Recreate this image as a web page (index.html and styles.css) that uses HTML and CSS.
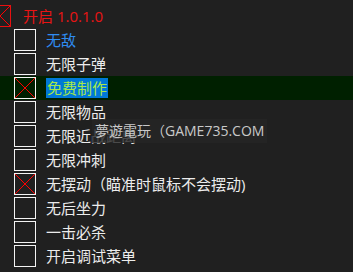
FILE: index.html
```html
<!DOCTYPE html>
<html lang="zh">
<head>
  <meta charset="UTF-8" />
  <title>开启 1.0.1.0</title>
  <link rel="stylesheet" href="styles.css">
</head>
<body>
  <div class="menu">
    <div class="row head">
      <span class="box checked red"></span>
      <span class="label">开启 1.0.1.0</span>
    </div>
    <div class="row">
      <span class="box"></span>
      <span class="label blue">无敌</span>
    </div>
    <div class="row">
      <span class="box"></span>
      <span class="label">无限子弹</span>
    </div>
    <div class="row active">
      <span class="box checked"></span>
      <span class="label"><span class="sel">免费制作</span></span>
    </div>
    <div class="row">
      <span class="box"></span>
      <span class="label">无限物品</span>
    </div>
    <div class="row">
      <span class="box"></span>
      <span class="label">无限近战距离</span>
      <span class="watermark">夢遊電玩（GAME735.COM</span>
    </div>
    <div class="row">
      <span class="box"></span>
      <span class="label">无限冲刺</span>
    </div>
    <div class="row">
      <span class="box checked"></span>
      <span class="label">无摆动（瞄准时鼠标不会摆动)</span>
    </div>
    <div class="row">
      <span class="box"></span>
      <span class="label">无后坐力</span>
    </div>
    <div class="row">
      <span class="box"></span>
      <span class="label">一击必杀</span>
    </div>
    <div class="row">
      <span class="box"></span>
      <span class="label">开启调试菜单</span>
    </div>
  </div>
</body>
</html>
```

FILE: styles.css
```css
* {
  box-sizing: border-box;
}

body {
  margin: 0;
  background-color: #202020;
  font-family: 'Open Sans', 'Noto Sans CJK SC', sans-serif;
  font-size: 15px;
  color: #ececec;
  overflow: hidden;
}

.menu {
  display: flex;
  flex-direction: column;
  padding-top: 4px;
}

.row {
  position: relative;
  display: flex;
  align-items: center;
  gap: 10px;
  height: 24px;
  padding-left: 14px;
}

.row.head {
  padding-left: 0;
  gap: 12px;
}

.row.head .box {
  margin-left: -11px;
}

.row.active {
  background-color: #002000;
}

.box {
  position: relative;
  flex: none;
  width: 22px;
  height: 22px;
  border: 1px solid #f4f4f4;
  overflow: hidden;
}

.box.checked {
  background:
    linear-gradient(to top right, transparent calc(50% - 0.7px), #ff0000 50%, transparent calc(50% + 0.7px)),
    linear-gradient(to bottom right, transparent calc(50% - 0.7px), #ff0000 50%, transparent calc(50% + 0.7px));
}

.box.red {
  border-color: #e81010;
}

.label {
  line-height: 20px;
  white-space: nowrap;
}

.head .label {
  color: #e81414;
}

.label.blue {
  color: #2f8cf2;
}

.sel {
  display: inline-block;
  background-color: #0078d7;
  color: #a6e84a;
  padding: 0 1px;
  line-height: 20px;
}

/* site watermark pasted over the screenshot */
.watermark {
  position: absolute;
  left: 92px;
  top: -5px;
  height: 24px;
  padding: 0 3px;
  background-color: rgba(38, 38, 38, 0.82);
  color: #c9c9c9;
  font-size: 14px;
  line-height: 24px;
  white-space: nowrap;
}
```
